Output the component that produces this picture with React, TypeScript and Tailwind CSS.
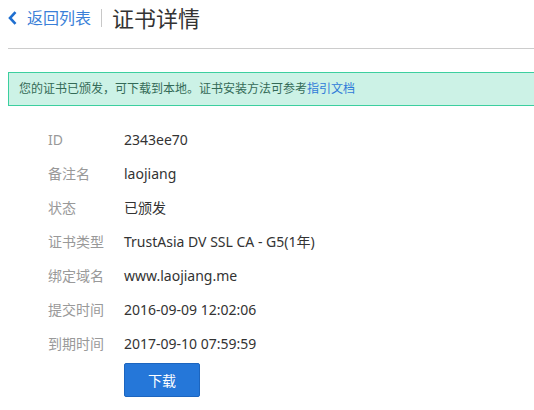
import React from "react";

const rows: [string, string][] = [
  ["ID", "2343ee70"],
  ["备注名", "laojiang"],
  ["状态", "已颁发"],
  ["证书类型", "TrustAsia DV SSL CA - G5(1年)"],
  ["绑定域名", "www.laojiang.me"],
  ["提交时间", "2016-09-09 12:02:06"],
  ["到期时间", "2017-09-10 07:59:59"],
];

export default function App() {
  return (
    <div
      className="w-[534px] h-[410px] bg-white overflow-hidden pl-[8px]"
      style={{ fontFamily: '"Noto Sans", "Noto Sans CJK SC", sans-serif' }}
    >
      <div className="pb-[12px] border-b border-[#cccccc]">
        <div className="h-[36px] flex items-center">
          <svg width="9" height="14" viewBox="0 0 9 14" className="mr-[10px]">
            <path d="M7.5 1.2 L2 7 L7.5 12.8" fill="none" stroke="#1f6fd0" strokeWidth="2.6" />
          </svg>
          <span className="text-[16px] text-[#3a7fd8] leading-none">返回列表</span>
          <span className="w-px h-[18px] bg-[#c8c8c8] mx-[10px]" />
          <span className="text-[22px] text-[#333333] leading-none">证书详情</span>
        </div>
      </div>
      <div className="mt-[23px] -mr-[10px] h-[34px] border border-[#3ccf9f] bg-[#ccf2e6] flex items-center pl-[10px] text-[12px] text-[#346a57]">
        您的证书已颁发，可下载到本地。证书安装方法可参考
        <span className="text-[#2f7ad8]">指引文档</span>
      </div>
      <div className="mt-[16px] pl-[40px]">
        {rows.map(([k, v]) => (
          <div key={k} className="h-[34px] flex items-center text-[14px]">
            <span className="w-[76px] text-[#999999]">{k}</span>
            <span className="text-[#333333]">{v}</span>
          </div>
        ))}
        <button className="mt-[3px] ml-[76px] w-[76px] h-[34px] bg-[#2577d9] border border-[#1c65bf] rounded-[2px] text-white text-[14px] flex items-center justify-center">
          下载
        </button>
      </div>
    </div>
  );
}
